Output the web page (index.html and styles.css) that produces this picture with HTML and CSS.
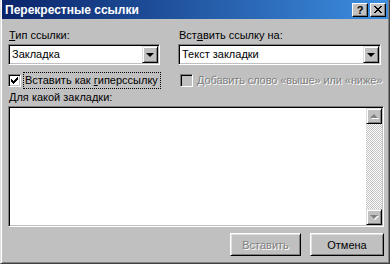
FILE: index.html
```html
<!doctype html>
<html>
  <head>
    <title>Перекрестные ссылки</title>
    <link rel="stylesheet" href="styles.css">
  </head>
  <body>
    <div class="window">
      <div class="titlebar">
        <span class="title">Перекрестные ссылки</span>
        <span class="caption-buttons">
          <span class="cap-btn help">?</span>
          <span class="cap-btn close">
            <svg width="8" height="7" viewBox="0 0 8 7"><path d="M0 0h2v1h-2zM6 0h2v1h-2zM1 1h2v1h-2zM5 1h2v1h-2zM2 2h4v1h-4zM3 3h2v1h-2zM2 4h4v1h-4zM1 5h2v1h-2zM5 5h2v1h-2zM0 6h2v1h-2zM6 6h2v1h-2z" fill="#000"/></svg>
          </span>
        </span>
      </div>

      <div class="content">
        <div class="top-row">
          <div class="col col-left">
            <div class="label"><u>Т</u>ип ссылки:</div>
            <div class="combo">
              <span class="combo-text">Закладка</span>
              <span class="drop"><span class="arrow-down"></span></span>
            </div>
          </div>
          <div class="col col-right">
            <div class="label">Вст<u>а</u>вить ссылку на:</div>
            <div class="combo">
              <span class="combo-text">Текст закладки</span>
              <span class="drop"><span class="arrow-down"></span></span>
            </div>
          </div>
        </div>

        <div class="check-row">
          <div class="check-left">
            <span class="checkbox">
              <svg width="7" height="7" viewBox="0 0 7 7"><path d="M6 0h1v1h-1zM5 1h1v1h-1zM0 2h1v1h-1zM4 2h1v1h-1zM0 3h2v1h-2zM3 3h2v1h-2zM1 4h3v1h-3zM2 5h1v1h-1z M6 1h1v1h-1zM5 2h2v1h-2zM4 3h2v1h-2zM0 4h1v1h-1zM3 4h2v1h-2zM1 5h3v1h-3zM2 6h1v1h-1z" fill="#000"/></svg>
            </span>
            <span class="focus">Вставить как <u>г</u>иперссылку</span>
          </div>
          <div class="check-right disabled">
            <span class="checkbox off"></span>
            <span class="check-label">Добавить слово «выше» или «ниже»</span>
          </div>
        </div>

        <div class="label label-list"><u>Д</u>ля какой закладки:</div>
        <div class="listbox">
          <div class="list-area"></div>
          <div class="scrollbar">
            <span class="scroll-btn"><span class="arrow-up-dis"></span></span>
            <span class="track"></span>
            <span class="scroll-btn"><span class="arrow-down-dis"></span></span>
          </div>
        </div>

        <div class="buttons">
          <span class="button disabled-btn">Вставить</span>
          <span class="button cancel">Отмена</span>
        </div>
      </div>
    </div>
  </body>
</html>
```

FILE: styles.css
```css
body {
  margin: 0;
  padding: 0;
  font-family: "Liberation Sans", Arial, sans-serif;
  font-size: 11px;
  color: #000;
  background-color: #c0c0c0;
}
.window {
  box-sizing: border-box;
  width: 390px;
  height: 264px;
  background-color: #c0c0c0;
  border-left: 1px solid #dfdfdf;
  border-right: 1px solid #404040;
  border-bottom: 1px solid #404040;
  box-shadow: inset 1px 0 #fff, inset -1px -1px #808080;
  padding-left: 1px;
  padding-right: 1px;
}
.titlebar {
  display: flex;
  align-items: center;
  justify-content: space-between;
  height: 19px;
  padding-left: 3px;
  padding-right: 2px;
  background: linear-gradient(to right, #0a246a, #3d8ee0);
}
.title {
  color: #fff;
  font-weight: bold;
  font-size: 12px;
}
.caption-buttons {
  display: flex;
  gap: 2px;
}
.cap-btn {
  box-sizing: border-box;
  display: flex;
  align-items: center;
  justify-content: center;
  width: 16px;
  height: 14px;
  background-color: #c0c0c0;
  border: 1px solid;
  border-color: #fff #000 #000 #fff;
  box-shadow: inset -1px -1px #808080;
  font-weight: bold;
  font-size: 11px;
  line-height: 12px;
}
.content {
  padding: 10px 4px 0 6px;
}
.top-row {
  display: flex;
  gap: 18px;
}
.col-left {
  width: 152px;
}
.col-right {
  width: 203px;
}
.label {
  height: 13px;
  line-height: 13px;
  margin-bottom: 2px;
  padding-left: 1px;
}
.combo {
  box-sizing: border-box;
  display: flex;
  height: 21px;
  background-color: #fff;
  border: 1px solid;
  border-color: #808080 #fff #fff #808080;
  box-shadow: inset 1px 1px #000, inset -1px -1px #c0c0c0;
  padding: 1px;
}
.combo-text {
  flex: 1;
  line-height: 17px;
  padding-left: 2px;
}
.drop {
  box-sizing: border-box;
  display: flex;
  align-items: center;
  justify-content: center;
  width: 16px;
  height: 17px;
  background-color: #c0c0c0;
  border: 1px solid;
  border-color: #dfdfdf #000 #000 #dfdfdf;
  box-shadow: inset 1px 1px #fff, inset -1px -1px #808080;
}
.arrow-down {
  width: 0;
  height: 0;
  border-left: 4px solid transparent;
  border-right: 4px solid transparent;
  border-top: 4px solid #000;
}
.check-row {
  display: flex;
  margin-top: 7px;
  height: 16px;
}
.check-left {
  display: flex;
  align-items: center;
  width: 171px;
}
.check-right {
  display: flex;
  align-items: center;
  padding-left: 1px;
  white-space: nowrap;
}
.checkbox {
  box-sizing: border-box;
  display: flex;
  align-items: center;
  justify-content: center;
  width: 13px;
  height: 13px;
  background-color: #fff;
  border: 1px solid;
  border-color: #808080 #fff #fff #808080;
  box-shadow: inset 1px 1px #000, inset -1px -1px #c0c0c0;
  margin-right: 3px;
}
.checkbox.off {
  background-color: #c0c0c0;
}
.focus {
  outline: 1px dotted #000;
  padding: 1px 2px 1px 1px;
  line-height: 13px;
  white-space: nowrap;
}
.disabled .check-label {
  color: #808080;
  text-shadow: 1px 1px #fff;
  margin-left: 1px;
  letter-spacing: -0.1px;
}
.label-list {
  margin-top: 3px;
}
.listbox {
  box-sizing: border-box;
  display: flex;
  width: 376px;
  height: 121px;
  margin-top: 1px;
  background-color: #fff;
  border: 1px solid;
  border-color: #808080 #fff #fff #808080;
  box-shadow: inset 1px 1px #000, inset -1px -1px #c0c0c0;
  padding: 1px;
}
.list-area {
  flex: 1;
}
.scrollbar {
  display: flex;
  flex-direction: column;
  width: 16px;
}
.scroll-btn {
  box-sizing: border-box;
  display: flex;
  align-items: center;
  justify-content: center;
  height: 16px;
  background-color: #c0c0c0;
  border: 1px solid;
  border-color: #dfdfdf #000 #000 #dfdfdf;
  box-shadow: inset 1px 1px #fff, inset -1px -1px #808080;
}
.track {
  flex: 1;
  background: repeating-conic-gradient(#fff 0 25%, #c0c0c0 0 50%) 0 0 / 2px 2px;
}
.arrow-up-dis {
  width: 0;
  height: 0;
  border-left: 4px solid transparent;
  border-right: 4px solid transparent;
  border-bottom: 4px solid #808080;
  filter: drop-shadow(1px 1px 0 #fff);
}
.arrow-down-dis {
  width: 0;
  height: 0;
  border-left: 4px solid transparent;
  border-right: 4px solid transparent;
  border-top: 4px solid #808080;
  filter: drop-shadow(1px 1px 0 #fff);
}
.buttons {
  display: flex;
  justify-content: flex-end;
  gap: 9px;
  margin-top: 6px;
}
.button {
  box-sizing: border-box;
  display: flex;
  align-items: center;
  justify-content: center;
  height: 23px;
  background-color: #c0c0c0;
  border: 1px solid;
  border-color: #fff #000 #000 #fff;
  box-shadow: inset 1px 1px #dfdfdf, inset -1px -1px #808080;
}
.disabled-btn {
  width: 71px;
  color: #808080;
  text-shadow: 1px 1px #fff;
}
.cancel {
  width: 74px;
}
```
